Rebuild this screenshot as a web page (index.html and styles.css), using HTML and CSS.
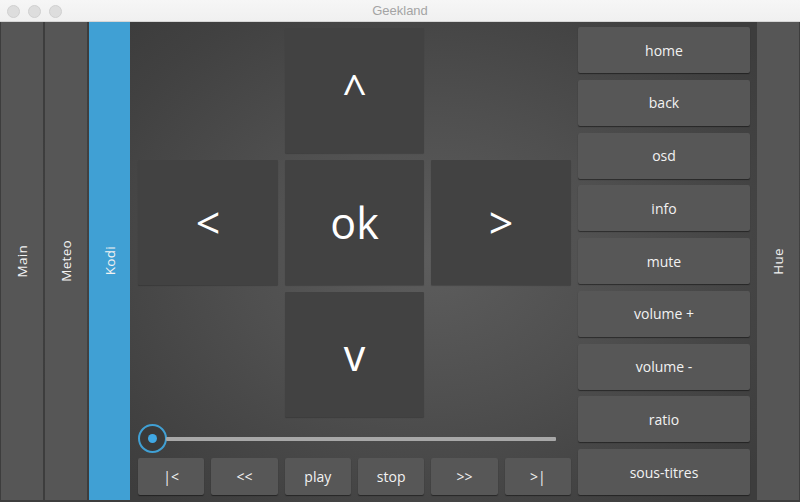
FILE: index.html
```html
<!DOCTYPE html>
<html>
<head>
<meta charset="utf-8">
<link rel="stylesheet" href="styles.css">
</head>
<body>
<div class="titlebar">
  <div class="lights"><span class="light"></span><span class="light"></span><span class="light"></span></div>
  <div class="title">Geekland</div>
</div>
<div class="app">
  <div class="tab"><span>Main</span></div>
  <div class="tab"><span>Meteo</span></div>
  <div class="tab active"><span>Kodi</span></div>
  <div class="main">
    <div class="center">
      <div class="dpad">
        <div class="tile empty"></div>
        <div class="tile">^</div>
        <div class="tile empty"></div>
        <div class="tile">&lt;</div>
        <div class="tile">ok</div>
        <div class="tile">&gt;</div>
        <div class="tile empty"></div>
        <div class="tile">v</div>
        <div class="tile empty"></div>
      </div>
      <div class="slider">
        <div class="handle"><div class="dot"></div></div>
        <div class="track"></div>
      </div>
      <div class="transport">
        <div class="btn">|&lt;</div>
        <div class="btn">&lt;&lt;</div>
        <div class="btn">play</div>
        <div class="btn">stop</div>
        <div class="btn">&gt;&gt;</div>
        <div class="btn">&gt;|</div>
      </div>
    </div>
    <div class="side">
      <div class="btn">home</div>
      <div class="btn">back</div>
      <div class="btn">osd</div>
      <div class="btn">info</div>
      <div class="btn">mute</div>
      <div class="btn">volume +</div>
      <div class="btn">volume -</div>
      <div class="btn">ratio</div>
      <div class="btn">sous-titres</div>
    </div>
  </div>
  <div class="tab right"><span>Hue</span></div>
</div>
</body>
</html>
```
FILE: styles.css
```css
html, body {
  margin: 0;
  padding: 0;
}
body {
  width: 800px;
  height: 502px;
  overflow: hidden;
  font-family: "Open Sans", "Noto Sans", sans-serif;
  background: #3e3e3e;
}
.titlebar {
  height: 21px;
  border-bottom: 1px solid #d6d6d6;
  background: linear-gradient(#f6f6f6, #f0f0f0);
  position: relative;
  display: flex;
  align-items: center;
  justify-content: center;
}
.lights {
  position: absolute;
  left: 7px;
  top: 5px;
  display: flex;
  gap: 8px;
}
.light {
  width: 11px;
  height: 11px;
  border-radius: 50%;
  background: #dddddd;
  border: 0.5px solid #d0d0d0;
}
.title {
  font-family: "Liberation Sans", "Noto Sans", sans-serif;
  font-size: 13px;
  color: #a4a4a4;
}
.app {
  height: 480px;
  display: flex;
  padding-left: 1px;
  box-sizing: border-box;
  background: radial-gradient(ellipse 420px 330px at 430px 235px, #5d5d5d 0%, #4f4f4f 45%, #414141 85%, #3d3d3d 100%);
}
.tab {
  width: 42px;
  height: 478px;
  margin-right: 2px;
  background: #565656;
  color: #f2f2f2;
  font-size: 13.5px;
  display: flex;
  align-items: center;
  justify-content: center;
}
.tab span {
  writing-mode: vertical-rl;
  transform: rotate(180deg);
  letter-spacing: 0.3px;
}
.tab.active {
  width: 41px;
  margin-right: 0;
  background: #40a0d4;
}
.tab.right {
  margin-right: 1px;
}
.main {
  flex: 1;
  display: flex;
  gap: 7px;
  padding: 0 7px 0 8px;
}
.center {
  width: 433px;
  padding-top: 6px;
  display: flex;
  flex-direction: column;
}
.dpad {
  display: grid;
  grid-template-columns: 140px 139px 140px;
  grid-template-rows: 125px 125px 125px;
  gap: 7px;
}
.tile {
  background: #424242;
  color: #ffffff;
  font-size: 43px;
  display: flex;
  align-items: center;
  justify-content: center;
  box-shadow: 0 1px 1px rgba(0,0,0,0.2);
  border-radius: 1px;
}
.tile.empty {
  background: transparent;
  box-shadow: none;
}
.slider {
  margin-top: 7px;
  height: 29px;
  display: flex;
  align-items: center;
  padding-right: 15px;
}
.handle {
  width: 25px;
  height: 25px;
  border-radius: 50%;
  border: 2px solid #40a0d4;
  background: #3a3a3a;
  display: flex;
  align-items: center;
  justify-content: center;
  flex: none;
}
.dot {
  width: 9px;
  height: 9px;
  border-radius: 50%;
  background: #40a8e4;
}
.track {
  flex: 1;
  height: 4px;
  background: #a8a8a8;
  border-radius: 1px;
  margin-left: -1px;
}
.transport {
  margin-top: 5px;
  display: flex;
  gap: 7px;
}
.transport .btn {
  flex: 1;
  height: 37px;
}
.btn {
  background: #575757;
  color: #f2f2f2;
  font-size: 14px;
  display: flex;
  align-items: center;
  justify-content: center;
  border-radius: 2px;
  box-shadow: 0 1px 1px rgba(0,0,0,0.45);
}
.side {
  width: 172px;
  padding-top: 5px;
  height: 468px;
  display: flex;
  flex-direction: column;
  justify-content: space-between;
}
.side .btn {
  height: 46px;
}
```
